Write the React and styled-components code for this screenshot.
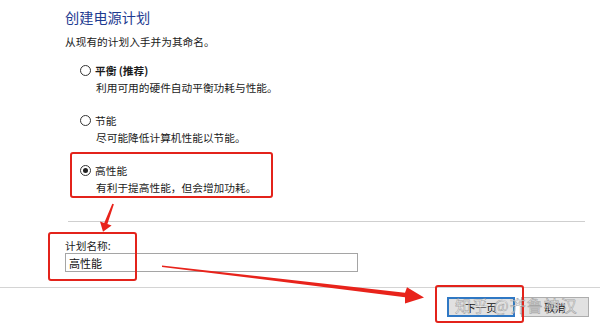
import React from "react";
import styled, { createGlobalStyle } from "styled-components";

const GlobalStyle = createGlobalStyle`
  html, body {
    margin: 0;
    padding: 0;
    background: #ffffff;
  }
  body {
    font-family: "Noto Sans CJK SC", "Liberation Sans", sans-serif;
    color: #1a1a1a;
  }
`;

const options = [
  { title: "平衡 (推荐)", desc: "利用可用的硬件自动平衡功耗与性能。", bold: true },
  { title: "节能", desc: "尽可能降低计算机性能以节能。" },
  { title: "高性能", desc: "有利于提高性能，但会增加功耗。", checked: true },
];

export default function App() {
  return (
    <Page>
      <GlobalStyle />
      <Main>
        <Title>创建电源计划</Title>
        <Subtitle>从现有的计划入手并为其命名。</Subtitle>
        <OptionList>
          {options.map((o) => (
            <Option key={o.title}>
              <OptionRow>
                <Radio $checked={o.checked} />
                <OptionTitle $bold={o.bold}>{o.title}</OptionTitle>
              </OptionRow>
              <OptionDesc>{o.desc}</OptionDesc>
            </Option>
          ))}
        </OptionList>
        <Separator />
        <FieldLabel>计划名称:</FieldLabel>
        <TextInput defaultValue="高性能" />
      </Main>
      <Footer>
        <Button $primary>下一页</Button>
        <Button>取消</Button>
      </Footer>

      {/* screenshot annotations */}
      <Mark $left={70} $top={152} $w={203} $h={46} />
      <Mark $left={48} $top={232} $w={89} $h={49} />
      <Mark $left={435} $top={285} $w={89} $h={38} />
      <Arrows viewBox="0 0 600 326">
        <polygon
          fill="#e8231b"
          points="112.3,203.7 113.9,204.3 107.4,224.1 111.6,225.6 103,231.8 100,221.4 104.2,222.9"
        />
        <polygon
          fill="#e8231b"
          points="162,265.5 405,292.8 407,287.3 424,297.6 405,303.4 405,297.2 162,266.9"
        />
      </Arrows>
      <Watermark>知乎 @齐鲁神汉</Watermark>
    </Page>
  );
}

const Page = styled.div`
  position: relative;
  width: 600px;
  height: 326px;
  overflow: hidden;
  background: #ffffff;
`;

const Main = styled.div`
  padding-left: 65px;
  display: flex;
  flex-direction: column;
  align-items: flex-start;
`;

const Title = styled.div`
  margin-top: 7px;
  font-size: 14.2px;
  line-height: 20px;
  color: #1e3b91;
`;

const Subtitle = styled.div`
  margin-top: 7px;
  font-size: 10.7px;
  line-height: 16px;
`;

const OptionList = styled.div`
  margin-top: 12px;
  margin-left: 15px;
  display: flex;
  flex-direction: column;
  gap: 16px;
`;

const Option = styled.div`
  display: flex;
  flex-direction: column;
`;

const OptionRow = styled.div`
  display: flex;
  align-items: center;
  gap: 4px;
  height: 17px;
`;

const Radio = styled.span`
  position: relative;
  box-sizing: border-box;
  width: 11px;
  height: 11px;
  border: 1px solid #333333;
  border-radius: 50%;
  background: #ffffff;
  &::after {
    content: "";
    display: ${(p) => (p.$checked ? "block" : "none")};
    position: absolute;
    left: 2px;
    top: 2px;
    width: 5px;
    height: 5px;
    border-radius: 50%;
    background: #222222;
  }
`;

const OptionTitle = styled.span`
  font-size: 10.7px;
  line-height: 17px;
  font-weight: ${(p) => (p.$bold ? 700 : 400)};
`;

const OptionDesc = styled.div`
  padding-left: 16px;
  font-size: 10.7px;
  line-height: 17px;
`;

const Separator = styled.div`
  margin-top: 25px;
  margin-left: 3px;
  width: 517px;
  height: 1px;
  background: #cfcfcf;
`;

const FieldLabel = styled.div`
  margin-top: 16px;
  font-size: 10.7px;
  line-height: 15px;
`;

const TextInput = styled.input`
  box-sizing: border-box;
  width: 293px;
  height: 19px;
  margin: 0;
  padding: 0 3px;
  border: 1px solid #a5a5a5;
  font-family: "Noto Sans CJK SC", "Liberation Sans", sans-serif;
  font-size: 11px;
  color: #111111;
  outline: none;
`;

const Footer = styled.div`
  margin-top: 15px;
  border-top: 1px solid #d4d4d4;
  padding: 9px 11px 0 0;
  display: flex;
  justify-content: flex-end;
  gap: 6px;
`;

const Button = styled.button`
  box-sizing: border-box;
  width: 68px;
  height: 20px;
  margin: 0;
  padding: 0;
  background: #e1e1e1;
  border: ${(p) => (p.$primary ? "2px solid #2f78c4" : "1px solid #adadad")};
  font-family: "Noto Sans CJK SC", "Liberation Sans", sans-serif;
  font-size: 10.7px;
  color: #111111;
`;

const Mark = styled.div`
  position: absolute;
  box-sizing: border-box;
  left: ${(p) => p.$left}px;
  top: ${(p) => p.$top}px;
  width: ${(p) => p.$w}px;
  height: ${(p) => p.$h}px;
  border: 2.5px solid #e3231b;
  border-radius: 3px;
  pointer-events: none;
`;

const Arrows = styled.svg`
  position: absolute;
  left: 0;
  top: 0;
  width: 600px;
  height: 326px;
  pointer-events: none;
`;

const Watermark = styled.div`
  position: absolute;
  left: 455px;
  top: 295px;
  font-size: 16px;
  line-height: 20px;
  letter-spacing: 1px;
  color: rgba(255, 255, 255, 0.6);
  -webkit-text-stroke: 0.6px rgba(115, 115, 115, 0.6);
  pointer-events: none;
  white-space: nowrap;
`;
